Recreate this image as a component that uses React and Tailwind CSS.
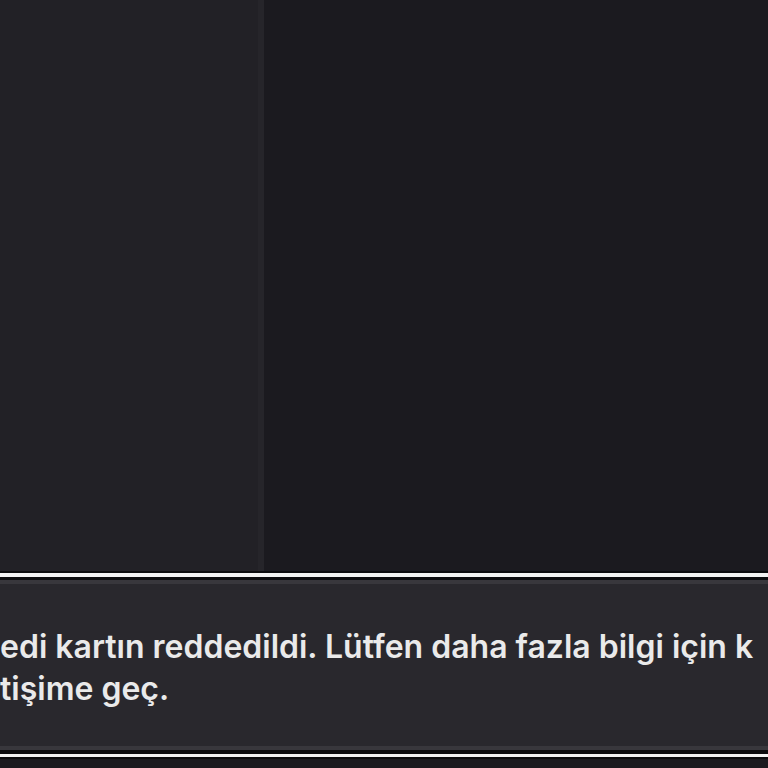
import React from 'react';

const App = () => {
  return (
    <div className="w-[768px] h-[768px] overflow-hidden bg-[#141318] flex flex-col font-['Inter','Noto_Sans',sans-serif]">
      {/* Workspace behind the notice */}
      <div className="h-[571px] flex shrink-0">
        <div className="w-[258px] bg-[#222126]" />
        <div className="w-[6px] bg-[#26252a]" />
        <div className="flex-1 bg-[#1b1a1f]" />
      </div>

      {/* Notice banner */}
      <div className="shrink-0 bg-[#0c0c0e] pt-[2px] pb-[2px]">
        <div className="h-[4px] bg-[#f2f2f2]" />
        <div className="h-[3px] bg-[#0c0c0e]" />
        <div className="border-t-[4px] border-b-[4px] border-[#38373c] bg-[#29282d] pt-[42px] pb-[36px] overflow-hidden">
          <p className="whitespace-nowrap text-[32px] leading-[42px] font-semibold text-[#eaeaea]">
            edi kartın reddedildi. Lütfen daha fazla bilgi için k
          </p>
          <p className="whitespace-nowrap text-[32px] leading-[42px] font-semibold text-[#eaeaea]">
            tişime geç.
          </p>
        </div>
        <div className="h-[4px] bg-[#0c0c0e]" />
        <div className="h-[3px] bg-[#f2f2f2]" />
      </div>
      <div className="flex-1 bg-[#1b1a1f]" />
    </div>
  );
};

export default App;
